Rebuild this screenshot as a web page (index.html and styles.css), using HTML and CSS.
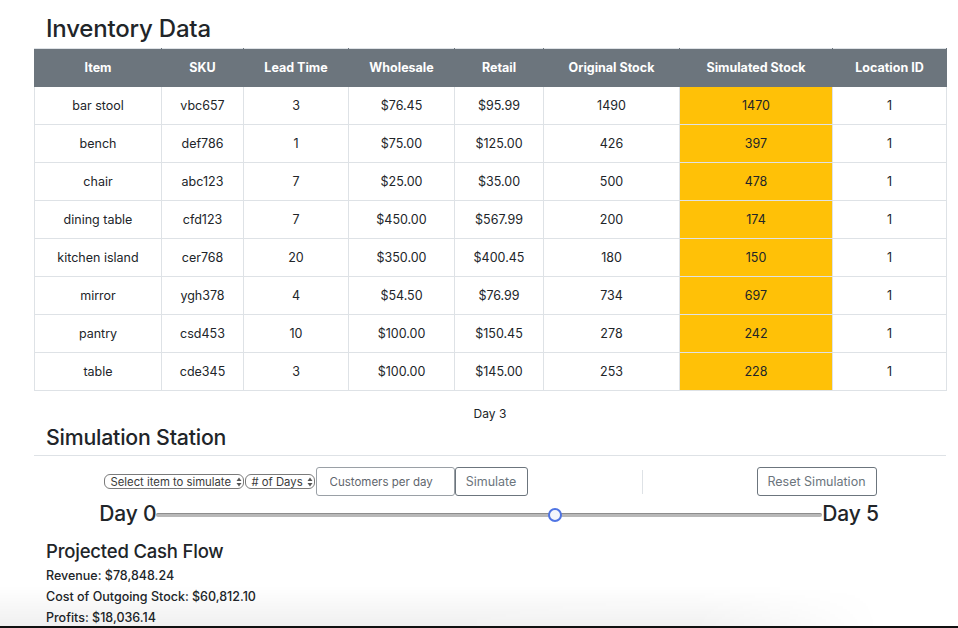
FILE: index.html
```html
<!DOCTYPE html>
<html lang="en">
<head>
<meta charset="utf-8">
<title>Inventory Simulation</title>
<link rel="stylesheet" href="styles.css">
</head>
<body>
<main class="page">
  <h2 class="title">Inventory Data</h2>
  <table class="inv">
    <colgroup>
      <col style="width:127px"><col style="width:82px"><col style="width:105px"><col style="width:106px">
      <col style="width:89px"><col style="width:136px"><col style="width:153px"><col style="width:114px">
    </colgroup>
    <thead>
      <tr><th>Item</th><th>SKU</th><th>Lead Time</th><th>Wholesale</th><th>Retail</th><th>Original Stock</th><th>Simulated Stock</th><th>Location ID</th></tr>
    </thead>
    <tbody>
      <tr><td>bar stool</td><td>vbc657</td><td>3</td><td>$76.45</td><td>$95.99</td><td>1490</td><td class="sim">1470</td><td>1</td></tr>
      <tr><td>bench</td><td>def786</td><td>1</td><td>$75.00</td><td>$125.00</td><td>426</td><td class="sim">397</td><td>1</td></tr>
      <tr><td>chair</td><td>abc123</td><td>7</td><td>$25.00</td><td>$35.00</td><td>500</td><td class="sim">478</td><td>1</td></tr>
      <tr><td>dining table</td><td>cfd123</td><td>7</td><td>$450.00</td><td>$567.99</td><td>200</td><td class="sim">174</td><td>1</td></tr>
      <tr><td>kitchen island</td><td>cer768</td><td>20</td><td>$350.00</td><td>$400.45</td><td>180</td><td class="sim">150</td><td>1</td></tr>
      <tr><td>mirror</td><td>ygh378</td><td>4</td><td>$54.50</td><td>$76.99</td><td>734</td><td class="sim">697</td><td>1</td></tr>
      <tr><td>pantry</td><td>csd453</td><td>10</td><td>$100.00</td><td>$150.45</td><td>278</td><td class="sim">242</td><td>1</td></tr>
      <tr><td>table</td><td>cde345</td><td>3</td><td>$100.00</td><td>$145.00</td><td>253</td><td class="sim">228</td><td>1</td></tr>
    </tbody>
  </table>
  <div class="day">Day 3</div>
  <h3 class="subtitle">Simulation Station</h3>
  <div class="controls">
    <div class="group">
      <span class="sel sel-item">Select item to simulate<svg class="arr" viewBox="0 0 6 10" width="6" height="10"><path d="M3 0.5 L5.5 4 H0.5 Z M3 9.5 L5.5 6 H0.5 Z" fill="#555"/></svg></span>
      <span class="sel sel-days">&#35; of Days<svg class="arr" viewBox="0 0 6 10" width="6" height="10"><path d="M3 0.5 L5.5 4 H0.5 Z M3 9.5 L5.5 6 H0.5 Z" fill="#555"/></svg></span>
      <input class="cust" type="text" placeholder="Customers per day">
      <button class="btn">Simulate</button>
    </div>
    <div class="sep"></div>
    <button class="btn reset">Reset Simulation</button>
  </div>
  <div class="slider-row">
    <span class="dlabel">Day 0</span>
    <div class="track"><div class="thumb"></div></div>
    <span class="dlabel">Day 5</span>
  </div>
  <h4 class="cash">Projected Cash Flow</h4>
  <p class="line first">Revenue: $78,848.24</p>
  <p class="line">Cost of Outgoing Stock: $60,812.10</p>
  <p class="line">Profits: $18,036.14</p>
</main>
<div class="fade"></div>
<div class="bottom-line"></div>
</body>
</html>
```

FILE: styles.css
```css
* { box-sizing: border-box; }
html, body { margin: 0; padding: 0; background: #fff; }
body {
  font-family: Inter, "Helvetica Neue", Arial, sans-serif;
  color: #212529;
  overflow: hidden;
  height: 628px;
}
.page {
  margin-left: 34px;
  width: 912px;
}
.title {
  margin: 13px 0 3px 12px;
  font-size: 24px;
  font-weight: 500;
  line-height: 32px;
  letter-spacing: -0.2px;
}
.inv {
  width: 912px;
  table-layout: fixed;
  border-collapse: collapse;
  font-size: 12.5px;
}
.inv th {
  background: #6c757d;
  color: #fff;
  font-weight: 700;
  height: 38px;
  padding: 0 6px;
  text-align: center;
  border: 1px solid #6c757d;
  border-top-color: #dee2e6;
}
.inv td {
  height: 38px;
  padding: 0 6px;
  text-align: center;
  border: 1px solid #dee2e6;
}
.inv td.sim { background: #ffc107; }
.day {
  text-align: center;
  font-size: 12px;
  margin-top: 15px;
  line-height: 16px;
}
.subtitle {
  margin: 1px 0 0 0;
  font-size: 21.3px;
  font-weight: 500;
  line-height: 28px;
  letter-spacing: -0.2px;
  padding-bottom: 4px;
  border-bottom: 1px solid #dee2e6;
  padding-left: 12px;
}
.controls {
  display: flex;
  justify-content: center;
  align-items: center;
  gap: 114px;
  margin-top: 11px;
  height: 29px;
}
.group {
  display: flex;
  align-items: center;
}
.sel {
  display: inline-flex;
  align-items: center;
  justify-content: space-between;
  height: 15px;
  border: 1px solid #7a7a7a;
  border-radius: 6px;
  font-size: 11.3px;
  color: #3a3a3a;
  padding: 0 1px 0 6px;
  margin-right: 1px;
  white-space: nowrap;
}
.sel-item { width: 140px; }
.sel-days { width: 70px; }
.arr { margin-left: 2px; }
.cust {
  width: 139px;
  height: 29px;
  border: 1px solid #9aa0a6;
  border-radius: 3px;
  padding: 0 13px;
  font-family: inherit;
  font-size: 11.5px;
  color: #495057;
}
.cust::placeholder { color: #5f666d; }
.btn {
  height: 29px;
  background: #fff;
  border: 1px solid #6c757d;
  border-radius: 3px;
  color: #6c757d;
  font-family: inherit;
  font-size: 12.5px;
  padding: 0 11px;
}
.group .btn { width: 73px; padding: 0; }
.reset { width: 120px; padding: 0; }
.sep {
  width: 1px;
  height: 24px;
  background: #dee2e6;
}
.slider-row {
  display: flex;
  justify-content: center;
  align-items: center;
  margin-top: 2px;
  height: 30px;
  padding-right: 2px;
}
.dlabel {
  font-size: 21px;
  font-weight: 500;
  letter-spacing: -0.2px;
}
.track {
  position: relative;
  width: 666px;
  height: 4px;
  background: #b8b8b8;
  border-top: 1px solid #8d8d8d;
  border-radius: 2px;
  margin-top: 4px;
}
.thumb {
  position: absolute;
  left: 392px;
  top: -6px;
  width: 14px;
  height: 14px;
  border-radius: 50%;
  border: 2.5px solid #4f74e3;
  background: #f3f5fb;
}
.cash {
  margin: 11px 0 0 12px;
  font-size: 18.5px;
  font-weight: 500;
  line-height: 24px;
  letter-spacing: -0.2px;
}
.line {
  margin: 0 0 0 12px;
  font-size: 12.5px;
  font-weight: 500;
  line-height: 21px;
}
.line.first { margin-top: 2px; }
.fade {
  position: fixed;
  left: 0;
  right: 0;
  bottom: 2px;
  height: 40px;
  background: linear-gradient(to bottom, rgba(0,0,0,0), rgba(0,0,0,0.06));
  -webkit-mask-image: linear-gradient(to right, #000 0, #000 340px, rgba(0,0,0,0.9) 700px, rgba(0,0,0,0) 880px);
  pointer-events: none;
}
.bottom-line {
  position: fixed;
  left: 0;
  right: 0;
  bottom: 0;
  height: 2px;
  background: #111;
}
```
